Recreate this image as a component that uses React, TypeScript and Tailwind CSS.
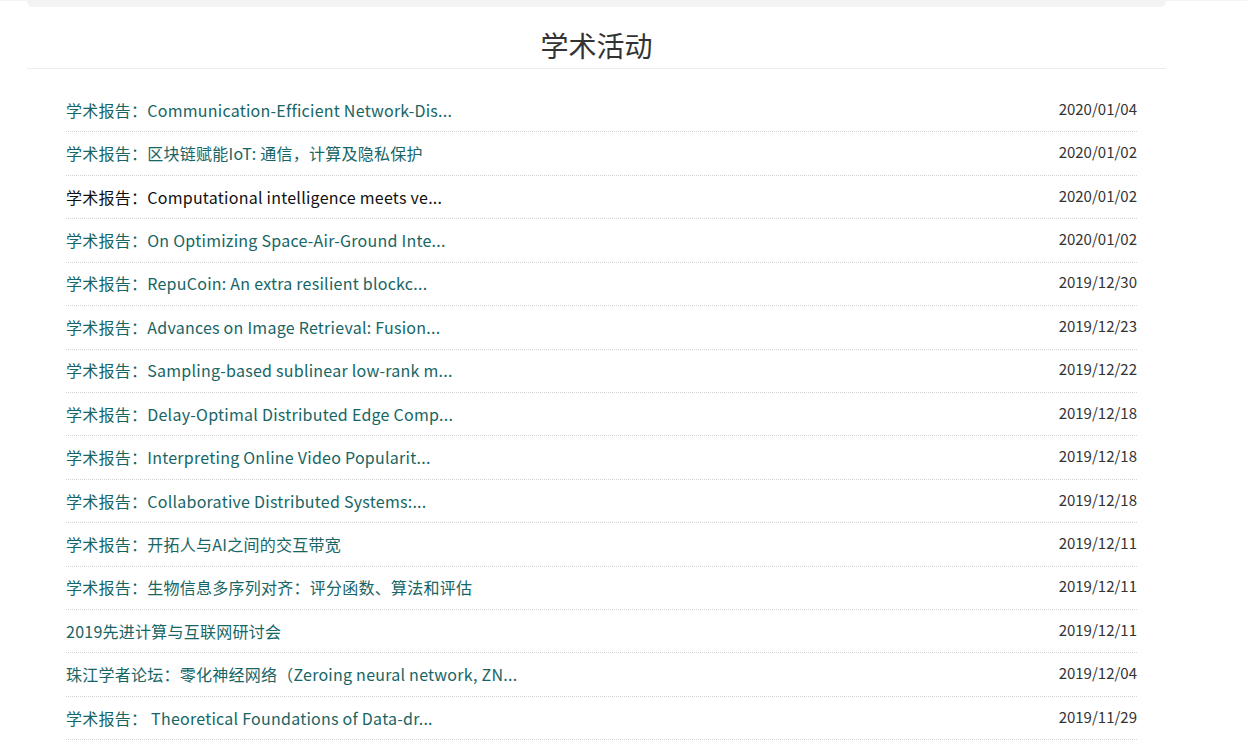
const items = [
  { title: '学术报告：Communication-Efficient Network-Dis...', date: '2020/01/04' },
  { title: '学术报告：区块链赋能IoT: 通信，计算及隐私保护', date: '2020/01/02' },
  { title: '学术报告：Computational intelligence meets ve...', date: '2020/01/02', active: true },
  { title: '学术报告：On Optimizing Space-Air-Ground Inte...', date: '2020/01/02' },
  { title: '学术报告：RepuCoin: An extra resilient blockc...', date: '2019/12/30' },
  { title: '学术报告：Advances on Image Retrieval: Fusion...', date: '2019/12/23' },
  { title: '学术报告：Sampling-based sublinear low-rank m...', date: '2019/12/22' },
  { title: '学术报告：Delay-Optimal Distributed Edge Comp...', date: '2019/12/18' },
  { title: '学术报告：Interpreting Online Video Popularit...', date: '2019/12/18' },
  { title: '学术报告：Collaborative Distributed Systems:...', date: '2019/12/18' },
  { title: '学术报告：开拓人与AI之间的交互带宽', date: '2019/12/11' },
  { title: '学术报告：生物信息多序列对齐：评分函数、算法和评估', date: '2019/12/11' },
  { title: '2019先进计算与互联网研讨会', date: '2019/12/11' },
  { title: '珠江学者论坛：零化神经网络（Zeroing neural network, ZN...', date: '2019/12/04' },
  { title: '学术报告： Theoretical Foundations of Data-dr...', date: '2019/11/29' },
]

export default function App() {
  return (
    <div
      className="min-h-screen bg-white border-t border-[#f3f3f3]"
      style={{ fontFamily: '"Noto Sans CJK SC", "Noto Sans", sans-serif' }}
    >
      <div className="ml-[27px] w-[1139px]">
        <div className="h-[6px] bg-[#f3f3f3] rounded-b-md" />
        <div className="h-[62px] border-b border-[#ececec] flex items-center justify-center">
          <h2 className="text-[28px] text-[#333] pt-[14px]">学术活动</h2>
        </div>
        <ul className="mt-[20px] ml-[39px] mr-[29px]">
          {items.map((it, i) => (
            <li
              key={i}
              className="h-[43.43px] border-b border-dotted border-[#d4d4d4] flex items-center justify-between"
            >
              <a
                className={`text-[16px] leading-none tracking-[0.25px] pb-[1px] ${
                  it.active ? 'text-[#111]' : 'text-[#176565]'
                }`}
              >
                {it.title}
              </a>
              <span className="text-[15px] leading-none text-[#333] pb-[4px]">{it.date}</span>
            </li>
          ))}
        </ul>
      </div>
    </div>
  )
}
